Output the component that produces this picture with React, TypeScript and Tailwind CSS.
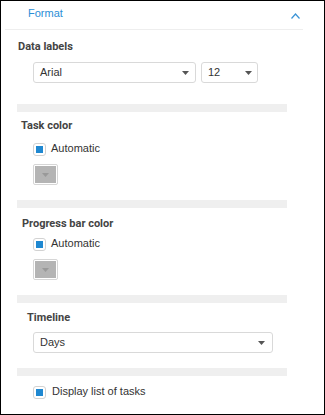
import React from 'react'

const sans = "font-['Liberation_Sans',Arial,sans-serif]"
const bold = "font-['Roboto',sans-serif] font-bold text-[11px] leading-[13px] text-[#444444]"

function Arrow({ color = '#555555' }: { color?: string }) {
    return (
        <svg width="7" height="4" viewBox="0 0 7 4" className="shrink-0">
            <polygon points="0,0 7,0 3.5,4" fill={color} />
        </svg>
    )
}

function SelectBox({ value, width, arrowRight }: { value: string; width: string; arrowRight: string }) {
    return (
        <div className={`${width} h-[21px] border border-[#d9d9d9] rounded-[3px] bg-white flex items-center justify-between pl-[6px] ${arrowRight}`}>
            <span className="text-[11px] leading-[13px] text-[#333333]">{value}</span>
            <Arrow />
        </div>
    )
}

function CheckRow({ label, textGap }: { label: string; textGap: string }) {
    return (
        <div className="flex items-start ml-[16px]">
            <div className="w-[13px] h-[13px] border border-[#d2d2d2] rounded-[3px] bg-white flex items-center justify-center">
                <div className="w-[7px] h-[7px] bg-[#1f88d1]" />
            </div>
            <span className={`${textGap} -mt-[1px] text-[11px] leading-[13px] text-[#333333]`}>{label}</span>
        </div>
    )
}

function ColorButton() {
    return (
        <div className="ml-[16px] w-[25px] h-[21px] border border-[#d6d6d6] rounded-[2px] bg-white p-[1px]">
            <div className="w-full h-full bg-[#b4b4b4] flex items-center justify-center">
                <Arrow color="#999999" />
            </div>
        </div>
    )
}

function Band({ mt }: { mt: string }) {
    return <div className={`${mt} h-[8px] w-[270px] bg-[#efefef]`} />
}

export default function App() {
    return (
        <div className={`w-[325px] h-[415px] border border-black bg-white ${sans}`}>
            {/* header */}
            <div className="ml-[4px] w-[298px] h-[29px] border-b border-[#eeeeee] flex items-start justify-between">
                <span className="ml-[23px] mt-[6px] text-[11px] leading-[13px] text-[#2b8ed6]">Format</span>
                <svg width="9" height="6" viewBox="0 0 9 6" className="mt-[12px] mr-[3px]">
                    <polyline points="0.5,5.5 4.5,1 8.5,5.5" fill="none" stroke="#3a93d6" strokeWidth="1.2" />
                </svg>
            </div>

            <div className="ml-[16px] w-[270px] flex flex-col">
                {/* data labels */}
                <div className={`${bold} mt-[10px] pl-[1px]`}>Data labels</div>
                <div className="mt-[9px] ml-[16px] flex gap-[5px]">
                    <SelectBox value="Arial" width="w-[163px]" arrowRight="pr-[6px]" />
                    <SelectBox value="12" width="w-[57px]" arrowRight="pr-[5px]" />
                </div>

                <Band mt="mt-[21px]" />

                {/* task color */}
                <div className={`${bold} mt-[7px] pl-[4px]`}>Task color</div>
                <div className="mt-[11px]">
                    <CheckRow label="Automatic" textGap="ml-[5px]" />
                </div>
                <div className="mt-[8px]">
                    <ColorButton />
                </div>

                <Band mt="mt-[15px]" />

                {/* progress bar color */}
                <div className={`${bold} mt-[9px] pl-[5px]`}>Progress bar color</div>
                <div className="mt-[8px]">
                    <CheckRow label="Automatic" textGap="ml-[5px]" />
                </div>
                <div className="mt-[8px]">
                    <ColorButton />
                </div>

                <Band mt="mt-[15px]" />

                {/* timeline */}
                <div className={`${bold} mt-[8px] pl-[10px]`}>Timeline</div>
                <div className="mt-[8px] ml-[16px]">
                    <SelectBox value="Days" width="w-[240px]" arrowRight="pr-[7px]" />
                </div>

                <Band mt="mt-[15px]" />

                <div className="mt-[10px]">
                    <CheckRow label="Display list of tasks" textGap="ml-[6px]" />
                </div>
            </div>
        </div>
    )
}
